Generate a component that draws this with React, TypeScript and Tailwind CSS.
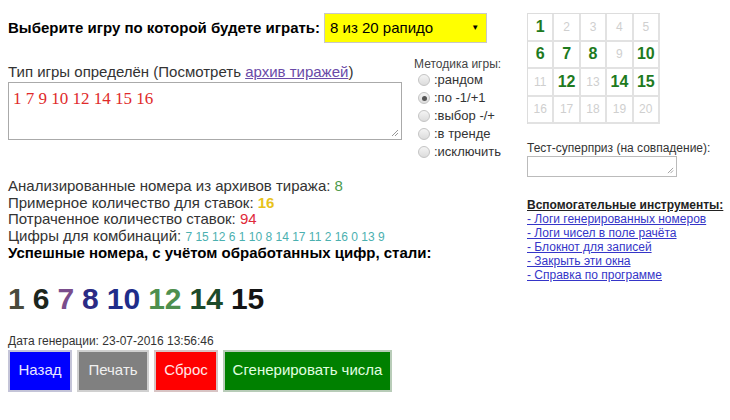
const grid = [
  [1, 2, 3, 4, 5],
  [6, 7, 8, 9, 10],
  [11, 12, 13, 14, 15],
  [16, 17, 18, 19, 20],
];
const picked = [1, 6, 7, 8, 10, 12, 14, 15];

const methods = [":рандом", ":по -1/+1", ":выбор -/+", ":в тренде", ":исключить"];

const tools = [
  "- Логи генерированных номеров",
  "- Логи чисел в поле ра\u0447ёта",
  "- Блокнот для записей",
  "- Закрыть эти окна",
  "- Справка по программе",
];

const result = [
  { n: 1, c: "text-[#4a4a3c]" },
  { n: 6, c: "text-[#1c261c]" },
  { n: 7, c: "text-[#7a4d8c]" },
  { n: 8, c: "text-[#2b2b85]" },
  { n: 10, c: "text-[#1f2d8a]" },
  { n: 12, c: "text-[#4e8f4e]" },
  { n: 14, c: "text-[#1d4a2a]" },
  { n: 15, c: "text-[#141414]" },
];

export default function App() {
  return (
    <div className="w-[730px] h-[420px] bg-white overflow-hidden font-['Liberation_Sans',Arial,sans-serif] text-[#222] flex">
      <div className="w-[515px] pl-2 flex flex-col">
        <div className="flex items-center mt-[13px] h-[30px]">
          <span className="text-[15px] font-bold text-black">Выберите игру по которой будете играть:</span>
          <div className="ml-[4px] w-[163px] h-[30px] bg-[#ffff00] border border-[#c8c8c8] flex items-center justify-between pl-[5px] pr-[7px]">
            <span className="text-[15px] text-black">8 из 20 рапидо</span>
            <span className="text-[8px] text-black">▼</span>
          </div>
        </div>

        <div className="flex">
          <div className="w-[394px] flex flex-col">
            <div className="mt-[20px] text-[15px] leading-[18px] text-[#333]">
              Тип игры определён (Посмотреть{" "}
              <a className="underline text-[#6a4aa8]">архив тиражей</a>)
            </div>
            <div className="relative w-[394px] h-[58px] border border-[#aaa] mt-[1px] px-[4px] pt-[3px]">
              <span className="font-['Liberation_Serif',serif] text-[17px] text-[#e02a2a]">1 7 9 10 12 14 15 16</span>
              <svg className="absolute right-[2px] bottom-[2px]" width="8" height="8" viewBox="0 0 8 8">
                <path d="M7 1L1 7M7 4L4 7" stroke="#999" strokeWidth="1" />
              </svg>
            </div>
          </div>
          <div className="ml-[12px] mt-[14px] flex flex-col">
            <span className="text-[12px] text-[#444] leading-[14px]">Методика игры:</span>
            {methods.map((m, i) => (
              <div key={m} className="flex items-center h-[18px] ml-[4px] gap-[4px]">
                <span className="w-[12px] h-[12px] rounded-full border border-[#c4c4c4] bg-gradient-to-b from-[#f4f4f4] to-[#dcdcdc] flex items-center justify-center">
                  {i === 1 && <span className="w-[5px] h-[5px] rounded-full bg-[#555]" />}
                </span>
                <span className="text-[13px] text-[#333]">{m}</span>
              </div>
            ))}
          </div>
        </div>

        <div className="mt-[17px] text-[15px] leading-[16.5px] text-[#333]">
          <div>
            Анализированные номера из архивов тиража: <span className="text-[#4c9a4c]">8</span>
          </div>
          <div>
            Примерное количество для ставок: <span className="text-[#e8c21a] font-bold">16</span>
          </div>
          <div>
            Потраченное количество ставок: <span className="text-[#e02a3a]">94</span>
          </div>
          <div>
            Цифры для комбинаций:{" "}
            <span className="text-[12px] text-[#4bb0b0]">7 15 12 6 1 10 8 14 17 11 2 16 0 13 9</span>
          </div>
          <div className="font-bold text-black">Успешные номера, с учётом обработанных цифр, стали:</div>
        </div>

        <div className="mt-[21px] flex gap-[8px] text-[30px] font-bold leading-[32px]">
          {result.map((r) => (
            <span key={r.n} className={r.c}>
              {r.n}
            </span>
          ))}
        </div>

        <div className="mt-[19px] text-[12px] leading-[14px] text-[#333]">Дата генерации: 23-07-2016 13:56:46</div>
        <div className="mt-[2px] flex gap-[5px] text-[15px]">
          <button className="w-[64px] h-[42px] bg-[#0000ff] text-[#e8e8ff] border-2 border-[#c4c4d8]">Назад</button>
          <button className="w-[72px] h-[42px] bg-[#808080] text-[#f0f0f0] border-2 border-[#d0d0d0]">Печать</button>
          <button className="w-[64px] h-[42px] bg-[#ff0000] text-[#ffe8e8] border-2 border-[#d8c4c4]">Сброс</button>
          <button className="w-[169px] h-[42px] bg-[#008000] text-[#e0ffe0] border-2 border-[#b8ccb8]">Сгенерировать числа</button>
        </div>
      </div>

      <div className="ml-[12px] w-[200px] flex flex-col">
        <div className="mt-[13px] w-[133px] grid grid-cols-5 border-l border-t border-[#ddd]">
          {grid.flat().map((n) => {
            const on = picked.includes(n);
            return (
              <div
                key={n}
                className={
                  "h-[27.5px] border-r-2 border-b-2 border-[#e2e2e2] flex items-center justify-center " +
                  (on ? "text-[16px] font-bold text-[#1e7a1e]" : "text-[12px] text-[#cfcfcf]")
                }
              >
                {n}
              </div>
            );
          })}
        </div>

        <div className="mt-[17px] text-[12px] leading-[14px] text-[#333]">Тест-суперприз (на совпадение):</div>
        <div className="relative mt-[1px] w-[150px] h-[21px] border border-[#bbb]">
          <svg className="absolute right-[2px] bottom-[2px]" width="7" height="7" viewBox="0 0 8 8">
            <path d="M7 1L1 7M7 4L4 7" stroke="#999" strokeWidth="1" />
          </svg>
        </div>

        <div className="mt-[21px] text-[12px] leading-[14px] font-bold underline text-[#222]">Вспомогательные инструменты:</div>
        {tools.map((t) => (
          <a key={t} className="text-[12px] leading-[14px] underline text-[#3535c8]">
            {t}
          </a>
        ))}
      </div>
    </div>
  );
}
